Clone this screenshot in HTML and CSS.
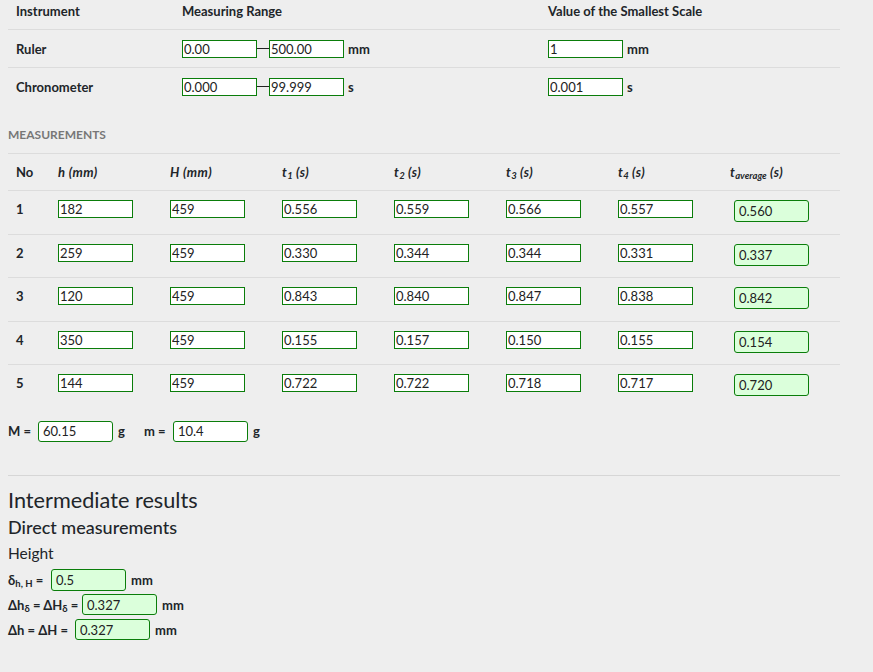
FILE: index.html
```html
<!DOCTYPE html>
<html>
<head>
<meta charset="utf-8">
<link rel="stylesheet" href="styles.css">
</head>
<body>
<div class="page">
  <div class="itable">
    <div class="irow ihead">
      <div class="cell">Instrument</div>
      <div class="cell">Measuring Range</div>
      <div class="cell">Value of the Smallest Scale</div>
    </div>
    <div class="irow">
      <div class="cell">Ruler</div>
      <div class="cell"><input class="fld" value="0.00"><span class="dash"></span><input class="fld" value="500.00"><span class="unit">mm</span></div>
      <div class="cell"><input class="fld" value="1"><span class="unit">mm</span></div>
    </div>
    <div class="irow">
      <div class="cell">Chronometer</div>
      <div class="cell"><input class="fld" value="0.000"><span class="dash"></span><input class="fld" value="99.999"><span class="unit">s</span></div>
      <div class="cell"><input class="fld" value="0.001"><span class="unit">s</span></div>
    </div>
  </div>

  <h5 class="section-title">MEASUREMENTS</h5>

  <div class="mtable">
    <div class="mrow mhead">
      <div class="cell">No</div>
      <div class="cell"><i>h (mm)</i></div>
      <div class="cell"><i>H (mm)</i></div>
      <div class="cell"><i>t<sub>1</sub> (s)</i></div>
      <div class="cell"><i>t<sub>2</sub> (s)</i></div>
      <div class="cell"><i>t<sub>3</sub> (s)</i></div>
      <div class="cell"><i>t<sub>4</sub> (s)</i></div>
      <div class="cell"><i>t<sub>average</sub> (s)</i></div>
    </div>
    <div class="mrow">
      <div class="cell num">1</div>
      <div class="cell"><input class="fld" value="182"></div>
      <div class="cell"><input class="fld" value="459"></div>
      <div class="cell"><input class="fld" value="0.556"></div>
      <div class="cell"><input class="fld" value="0.559"></div>
      <div class="cell"><input class="fld" value="0.566"></div>
      <div class="cell"><input class="fld" value="0.557"></div>
      <div class="cell"><input class="res avg" value="0.560"></div>
    </div>
    <div class="mrow">
      <div class="cell num">2</div>
      <div class="cell"><input class="fld" value="259"></div>
      <div class="cell"><input class="fld" value="459"></div>
      <div class="cell"><input class="fld" value="0.330"></div>
      <div class="cell"><input class="fld" value="0.344"></div>
      <div class="cell"><input class="fld" value="0.344"></div>
      <div class="cell"><input class="fld" value="0.331"></div>
      <div class="cell"><input class="res avg" value="0.337"></div>
    </div>
    <div class="mrow">
      <div class="cell num">3</div>
      <div class="cell"><input class="fld" value="120"></div>
      <div class="cell"><input class="fld" value="459"></div>
      <div class="cell"><input class="fld" value="0.843"></div>
      <div class="cell"><input class="fld" value="0.840"></div>
      <div class="cell"><input class="fld" value="0.847"></div>
      <div class="cell"><input class="fld" value="0.838"></div>
      <div class="cell"><input class="res avg" value="0.842"></div>
    </div>
    <div class="mrow">
      <div class="cell num">4</div>
      <div class="cell"><input class="fld" value="350"></div>
      <div class="cell"><input class="fld" value="459"></div>
      <div class="cell"><input class="fld" value="0.155"></div>
      <div class="cell"><input class="fld" value="0.157"></div>
      <div class="cell"><input class="fld" value="0.150"></div>
      <div class="cell"><input class="fld" value="0.155"></div>
      <div class="cell"><input class="res avg" value="0.154"></div>
    </div>
    <div class="mrow">
      <div class="cell num">5</div>
      <div class="cell"><input class="fld" value="144"></div>
      <div class="cell"><input class="fld" value="459"></div>
      <div class="cell"><input class="fld" value="0.722"></div>
      <div class="cell"><input class="fld" value="0.722"></div>
      <div class="cell"><input class="fld" value="0.718"></div>
      <div class="cell"><input class="fld" value="0.717"></div>
      <div class="cell"><input class="res avg" value="0.720"></div>
    </div>
  </div>

  <div class="masses">
    <span class="lbl lbl-M">M =</span><input class="mass" value="60.15"><span class="unit">g</span>
    <span class="lbl lbl-m">m =</span><input class="mass" value="10.4"><span class="unit">g</span>
  </div>

  <hr class="sep">

  <h2 class="h-inter">Intermediate results</h2>
  <h3 class="h-direct">Direct measurements</h3>
  <h4 class="h-height">Height</h4>

  <div class="results">
    <div class="rrow">
      <span class="lbl l1">δ<sub>h, H</sub> =</span><input class="res r1" value="0.5"><span class="unit">mm</span>
    </div>
    <div class="rrow">
      <span class="lbl l2">Δh<sub>δ</sub> = ΔH<sub>δ</sub> =</span><input class="res r2" value="0.327"><span class="unit">mm</span>
    </div>
    <div class="rrow">
      <span class="lbl l3">Δh = ΔH =</span><input class="res r3" value="0.327"><span class="unit">mm</span>
    </div>
  </div>
</div>
</body>
</html>
```
FILE: styles.css
```css
html, body {
  margin: 0;
  padding: 0;
  background: #eeeeee;
}
body {
  font-family: Lato, "Liberation Sans", sans-serif;
  font-size: 13px;
  color: #212529;
}
.page {
  width: 832px;
  padding: 0 8px;
}
input {
  font-family: Lato, "Liberation Sans", sans-serif;
  font-size: 13px;
  color: #222;
  box-sizing: border-box;
  margin: 0;
  outline: none;
}
.fld {
  width: 75px;
  height: 18px;
  border: 1px solid #0a7d0a;
  background: #fff;
  padding: 0 1px;
  border-radius: 0;
}
.unit {
  font-weight: bold;
  margin-left: 4px;
}

/* instrument table */
.irow {
  display: grid;
  grid-template-columns: 166px 366px 1fr;
  border-top: 1px solid #dcdcdc;
  height: 38px;
  box-sizing: border-box;
}
.irow.ihead {
  border-top: none;
  height: 29px;
}
.irow .cell {
  display: flex;
  align-items: center;
  padding: 0 8px;
  font-weight: bold;
}
.irow.ihead .cell {
  align-items: flex-start;
  padding-top: 3px;
  line-height: 17px;
}
.dash {
  display: inline-block;
  width: 12px;
  height: 1px;
  background: #222;
}

.section-title {
  margin: 0;
  padding: 22px 0 10px;
  line-height: 16px;
  font-size: 12px;
  font-weight: bold;
  color: #777;
}

/* measurements */
.mrow {
  display: grid;
  grid-template-columns: 42px repeat(6, 112px) 1fr;
  border-top: 1px solid #dcdcdc;
  box-sizing: border-box;
  height: 43.5px;
  padding-top: 9px;
  align-items: start;
}
.mrow.mhead {
  height: 37px;
  padding-top: 0;
  align-items: center;
}
.mrow .cell {
  padding: 0 8px;
  font-weight: bold;
  line-height: 18px;
}
.mrow.mhead .cell i {
  font-style: italic;
  letter-spacing: 0.4px;
}
sub {
  font-size: 9.5px;
  vertical-align: -2px;
  line-height: 0;
  letter-spacing: 0;
}
.res {
  width: 75px;
  border: 1px solid #0a7d0a;
  border-radius: 3px;
  background: #dbffdb;
  padding: 0 4px;
}
.avg {
  height: 22px;
  margin-left: 4px;
}

.masses {
  display: flex;
  align-items: center;
  margin-top: 13px;
  height: 21px;
}
.masses .lbl {
  font-weight: bold;
}
.lbl-M {
  width: 30px;
}
.lbl-m {
  margin-left: 19px;
  width: 29px;
}
.mass {
  width: 75px;
  height: 21px;
  border: 1px solid #0a7d0a;
  border-radius: 3px;
  background: #fff;
  padding: 0 4px;
}
.masses .unit {
  margin-left: 5px;
}

.sep {
  margin: 33px 0 0;
  border: none;
  border-top: 1px solid #d6d6d6;
  height: 0;
}

.h-inter {
  margin: 11px 0 0;
  font-size: 21.7px;
  font-weight: normal;
  line-height: 26px;
}
.h-direct {
  margin: 2px 0 0;
  font-size: 18px;
  font-weight: 500;
  line-height: 25px;
}
.h-height {
  margin: 2px 0 0;
  font-size: 15.5px;
  font-weight: normal;
  line-height: 22px;
}

.results {
  margin-top: 5px;
  display: flex;
  flex-direction: column;
  gap: 3px;
}
.rrow {
  display: flex;
  align-items: center;
  height: 22px;
}
.rrow .lbl {
  font-weight: bold;
}
.l1 { width: 43px; }
.l2 { width: 74px; }
.l3 { width: 67px; }
.rrow .unit {
  margin-left: 5px;
}
.r1 { height: 22px; }
.r2 { height: 21px; }
.r3 { height: 21px; }
```
